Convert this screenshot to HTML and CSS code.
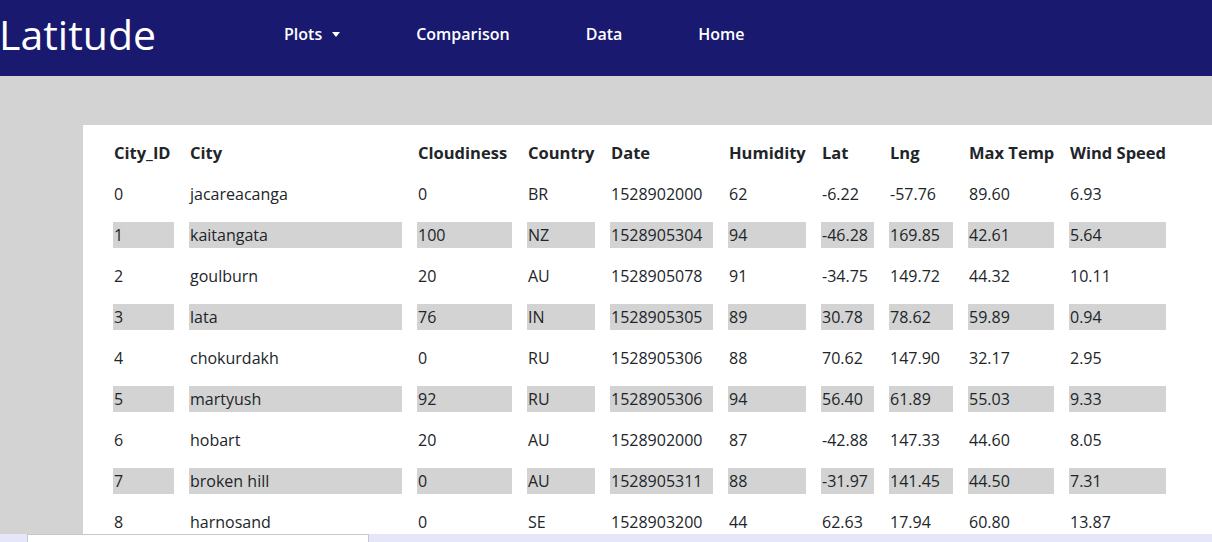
FILE: index.html
```html
<!DOCTYPE html>
<html lang="en">
<head>
<meta charset="utf-8">
<title>Latitude</title>
<link rel="stylesheet" href="styles.css">
</head>
<body>
<nav class="navbar">
  <a class="brand" href="#">Latitude</a>
  <ul class="nav">
    <li><a class="nav-link dropdown" href="#">Plots<span class="caret"></span></a></li>
    <li><a class="nav-link" href="#">Comparison</a></li>
    <li><a class="nav-link" href="#">Data</a></li>
    <li><a class="nav-link" href="#">Home</a></li>
  </ul>
</nav>
<main class="main">
  <section class="card">
    <table class="data">
      <thead>
        <tr>
          <th class="c-id">City_ID</th><th class="c-city">City</th><th class="c-cloud">Cloudiness</th><th class="c-country">Country</th><th class="c-date">Date</th><th class="c-hum">Humidity</th><th class="c-lat">Lat</th><th class="c-lng">Lng</th><th class="c-temp">Max Temp</th><th class="c-wind">Wind Speed</th>
        </tr>
      </thead>
      <tbody>
        <tr><td>0</td><td>jacareacanga</td><td>0</td><td>BR</td><td>1528902000</td><td>62</td><td>-6.22</td><td>-57.76</td><td>89.60</td><td>6.93</td></tr>
        <tr><td>1</td><td>kaitangata</td><td>100</td><td>NZ</td><td>1528905304</td><td>94</td><td>-46.28</td><td>169.85</td><td>42.61</td><td>5.64</td></tr>
        <tr><td>2</td><td>goulburn</td><td>20</td><td>AU</td><td>1528905078</td><td>91</td><td>-34.75</td><td>149.72</td><td>44.32</td><td>10.11</td></tr>
        <tr><td>3</td><td>lata</td><td>76</td><td>IN</td><td>1528905305</td><td>89</td><td>30.78</td><td>78.62</td><td>59.89</td><td>0.94</td></tr>
        <tr><td>4</td><td>chokurdakh</td><td>0</td><td>RU</td><td>1528905306</td><td>88</td><td>70.62</td><td>147.90</td><td>32.17</td><td>2.95</td></tr>
        <tr><td>5</td><td>martyush</td><td>92</td><td>RU</td><td>1528905306</td><td>94</td><td>56.40</td><td>61.89</td><td>55.03</td><td>9.33</td></tr>
        <tr><td>6</td><td>hobart</td><td>20</td><td>AU</td><td>1528902000</td><td>87</td><td>-42.88</td><td>147.33</td><td>44.60</td><td>8.05</td></tr>
        <tr><td>7</td><td>broken hill</td><td>0</td><td>AU</td><td>1528905311</td><td>88</td><td>-31.97</td><td>141.45</td><td>44.50</td><td>7.31</td></tr>
        <tr><td>8</td><td>harnosand</td><td>0</td><td>SE</td><td>1528903200</td><td>44</td><td>62.63</td><td>17.94</td><td>60.80</td><td>13.87</td></tr>
      </tbody>
    </table>
  </section>
</main>
<div class="bottom-bar"><div class="bottom-tab"></div></div>
</body>
</html>
```
FILE: styles.css
```css
* { box-sizing: border-box; }

html, body {
  margin: 0;
  padding: 0;
}

body {
  background: #d3d3d3;
  font-family: "Open Sans", "Noto Sans", "DejaVu Sans", sans-serif;
  color: #212529;
  font-size: 16px;
  line-height: 24px;
}

.navbar {
  background: #191970;
  height: 76px;
  display: flex;
  align-items: center;
  padding-bottom: 8px;
}

.brand {
  color: #ffffff;
  text-decoration: none;
  font-size: 41px;
  line-height: 1;
  margin-left: -1px;
  width: 247px;
  flex: none;
}

.nav {
  list-style: none;
  margin: 0;
  padding: 0;
  display: flex;
}

.nav-link {
  display: block;
  color: #ffffff;
  text-decoration: none;
  font-size: 16px;
  font-weight: 600;
  padding: 0 38px;
}

.caret {
  display: inline-block;
  margin-left: 10px;
  vertical-align: 3px;
  border-top: 5px solid #ffffff;
  border-left: 4.5px solid transparent;
  border-right: 4.5px solid transparent;
}

.main {
  padding-top: 49px;
  padding-left: 83px;
}

.card {
  background: #ffffff;
  padding-left: 15px;
}

.data {
  table-layout: fixed;
  border-collapse: separate;
  border-spacing: 15px;
  width: 1083px;
}

.data th,
.data td {
  padding: 1px;
  text-align: left;
  white-space: nowrap;
  height: 26px;
}

.data th {
  font-weight: 700;
  font-size: 16.5px;
}

.data tbody tr:nth-child(even) td {
  background: #d3d3d3;
}

.c-id { width: 61px; }
.c-city { width: 213px; }
.c-cloud { width: 95px; }
.c-country { width: 68px; }
.c-date { width: 103px; }
.c-hum { width: 78px; }
.c-lat { width: 53px; }
.c-lng { width: 64px; }
.c-temp { width: 86px; }
.c-wind { width: 97px; }

.bottom-bar {
  position: fixed;
  left: 0;
  right: 0;
  bottom: 0;
  height: 8px;
  background: #e6e6fa;
}

.bottom-tab {
  margin-left: 27px;
  width: 342px;
  height: 8px;
  background: #ffffff;
  border: 1px solid #c8c8c8;
  border-bottom: none;
}
```
